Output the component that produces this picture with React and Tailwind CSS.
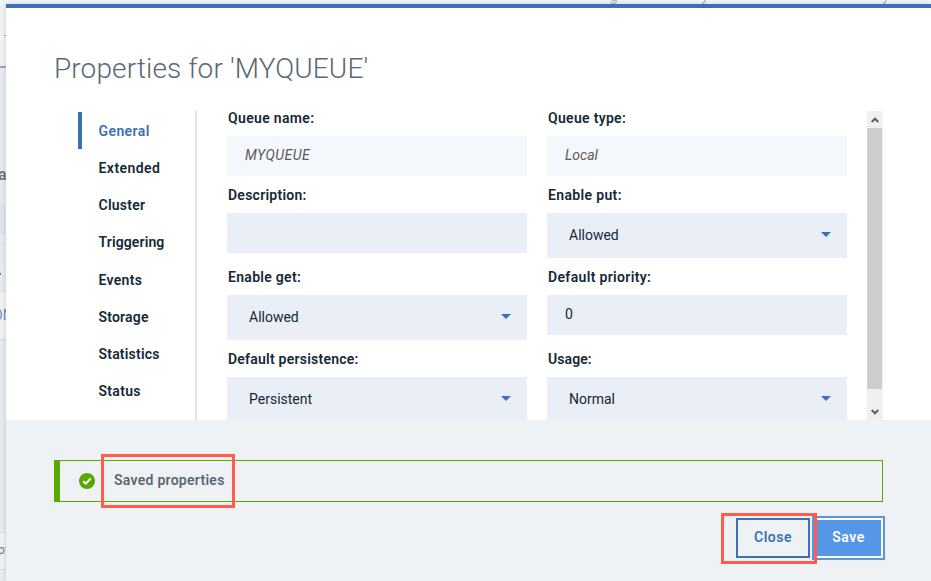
import React from "react";

const tabs = [
  { name: "General", cls: "text-[#3d70b2] tracking-[0.4px]", active: true },
  { name: "Extended", cls: "tracking-[0.45px]" },
  { name: "Cluster", cls: "tracking-[0.25px]" },
  { name: "Triggering", cls: "tracking-[0.12px]" },
  { name: "Events", cls: "tracking-[0.3px]" },
  { name: "Storage", cls: "tracking-[0.2px]" },
  { name: "Statistics", cls: "tracking-[0.2px]" },
  { name: "Status", cls: "tracking-[0.3px]" },
];

function Label({ children, cls = "tracking-[0.3px]" }) {
  return <label className={`block h-[17px] whitespace-nowrap pl-px text-sm leading-[14px] font-semibold ${cls}`}>{children}</label>;
}

function ReadOnly({ children, cls = "" }) {
  return <div className={`mt-2 flex h-10 items-center bg-[#f4f7fb] pb-0.5 pl-[18px] text-sm text-[#5a5a5a] italic ${cls}`}><span>{children}</span></div>;
}

function Input({ children = "" }) {
  return <div className="mt-2 flex h-10 items-center bg-[#eaeff7] pb-0.5 pl-[18px] text-sm">{children}</div>;
}

function Select({ children, cls = "" }) {
  return (
    <div className="mt-2 flex h-[45px] items-center justify-between bg-[#eaeff7] pr-4 pb-0.5 pl-[22px] text-sm">
      <span className={cls}>{children}</span>
      <svg width="10" height="5" viewBox="0 0 10 5" className="block"><path d="M0 0h10L5 5z" fill="#3d70b2" /></svg>
    </div>
  );
}

function Backdrop() {
  return (
    <div className="flex w-1.5 shrink-0 flex-col overflow-hidden whitespace-nowrap bg-[#e7ebee]">
      <div className="h-16 border-b-2 border-[#8aa9d0] bg-[#f0f1f3] pt-[31px]">
        <div className="ml-1 h-px w-2 bg-[#8aa9d0]" />
      </div>
      <div className="h-[135px] pt-[97px] text-base leading-5 font-bold text-[#777]"><span className="-ml-[2px]">a</span></div>
      <div className="h-8 bg-[#dfe3ec]" />
      <div className="h-[9px] border-b border-[#d9dcdf]" />
      <div className="h-12 border-b border-[#d9dcdf] pt-[17px] text-sm leading-[18px] text-[#555]"><span className="-ml-[8px]">A</span></div>
      <div className="h-12 border-b border-[#d9dcdf] bg-[#f0f1f3] pt-3.5 text-sm leading-[18px] text-[#6d8fc0]"><span className="-ml-[7px]">ON</span></div>
      <div className="h-[193px] border-b border-[#d9dcdf]" />
      <div className="h-[37px] border-b border-[#d9dcdf] bg-[#f0f1f3] pt-2 text-xs leading-[18px] text-[#6b7d95]"><span className="-ml-[2px]">of</span></div>
    </div>
  );
}

export default function App() {
  return (
    <div className="flex h-[581px] w-[931px] flex-col overflow-hidden bg-[#f0f3f6] font-['Roboto','Liberation_Sans',sans-serif] text-[#152935]">
      <div className="flex h-1 shrink-0 items-end overflow-hidden bg-[#f3f6f8] pl-[609px] text-base leading-none text-[#9db9dc]">
        <span className="w-[92px]">g</span>
        <span className="w-[181px]">y</span>
        <span>y</span>
      </div>
      <div className="flex min-h-0 flex-1">
        <Backdrop />
        <main className="flex min-w-0 flex-1 flex-col border-t-4 border-[#3d70b2] bg-white shadow-[0_0_5px_rgba(0,0,0,0.15)]">
          <h1 className="h-[103px] pt-[43px] pl-12 text-[28px] leading-9 font-light tracking-[0.11px] whitespace-nowrap text-[#5a6872]">Properties for 'MYQUEUE'</h1>
          <div className="flex h-[309px] overflow-hidden">
            <nav className="ml-[72px] w-[119px] shrink-0 border-r-2 border-[#dfe3e6] pt-px">
              {tabs.map((t) => (
                <div key={t.name} className={`flex h-[37.2px] items-center border-l-4 pt-[0.5px] pl-[16.5px] text-sm font-semibold ${t.active ? "border-[#3d70b2]" : "border-transparent"}`}>
                  <span className={t.cls}>{t.name}</span>
                </div>
              ))}
            </nav>
            <div className="ml-[30px] grid w-[620px] shrink-0 grid-cols-[300px_300px] grid-rows-[77px_82px_82px_82px] gap-x-5">
              <div><Label cls="tracking-[0.33px]">Queue name:</Label><ReadOnly cls="tracking-[0.45px]">MYQUEUE</ReadOnly></div>
              <div><Label>Queue type:</Label><ReadOnly>Local</ReadOnly></div>
              <div><Label cls="tracking-[0.25px]">Description:</Label><Input /></div>
              <div><Label cls="tracking-[0.35px]">Enable put:</Label><Select>Allowed</Select></div>
              <div><Label>Enable get:</Label><Select>Allowed</Select></div>
              <div><Label cls="tracking-[0.34px]">Default priority:</Label><Input>0</Input></div>
              <div><Label cls="tracking-[0.23px]">Default persistence:</Label><Select>Persistent</Select></div>
              <div><Label cls="tracking-[0.08px]">Usage:</Label><Select>Normal</Select></div>
            </div>
            <div className="ml-5 flex w-4 flex-col bg-[#f0f0f0]">
              <div className="flex h-[17px] items-center pl-1">
                <svg width="8" height="6" viewBox="0 0 8 6"><path d="M.7 5 4 1.7 7.3 5" fill="none" stroke="#606060" strokeWidth="2" /></svg>
              </div>
              <div className="h-[261px] w-[15px] bg-[#cdcdcd]" />
              <div className="flex flex-1 items-end pb-[5px] pl-1">
                <svg width="8" height="6" viewBox="0 0 8 6"><path d="M.7 1 4 4.3 7.3 1" fill="none" stroke="#606060" strokeWidth="2" /></svg>
              </div>
            </div>
          </div>
          <footer className="flex-1 bg-[#eff2f5] pt-10 pl-12">
            <div className="relative flex h-[42px] w-[829px] items-center border border-l-[6px] border-[#5aa700] pl-[19px]">
              <svg width="16" height="16" viewBox="0 0 16 16"><circle cx="8" cy="8" r="8" fill="#5aa700" /><path d="m4.2 8.3 2.5 2.4 5-5.2" fill="none" stroke="#fff" strokeWidth="2" /></svg>
              <span className="ml-[19px] pb-0.5 text-sm font-semibold tracking-[0.27px] text-[#5a6872]">Saved properties</span>
              <div className="absolute -top-[7px] left-[41px] h-[54px] w-[134px] border-3 border-[#ff5c49]" />
            </div>
            <div className="relative mt-3.5 ml-[682px] flex w-[149px] items-center justify-between text-sm font-semibold tracking-[0.5px]">
              <button className="h-10 w-[74px] border-2 border-[#3d70b2] pb-0.5 text-[#3d70b2]">Close</button>
              <button className="h-11 w-[73px] border-2 border-[#5596e6] bg-white p-0.5 text-white"><span className="flex h-full items-center justify-center bg-[#5596e6] pb-0.5">Save</span></button>
              <div className="absolute -top-[3px] -left-[15px] h-[51px] w-24 border-3 border-[#ff5c49]" />
            </div>
          </footer>
        </main>
      </div>
    </div>
  );
}
